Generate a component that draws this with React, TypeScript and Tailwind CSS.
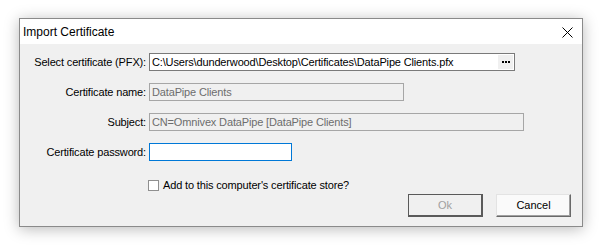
import React from "react";

const font = { fontFamily: '"Liberation Sans", Arial, sans-serif' };

function Label({ children }: { children: React.ReactNode }) {
  return (
    <div className="w-[127px] shrink-0 text-right pr-[1px] text-[11px] text-black leading-none tracking-[-0.15px]">
      {children}
    </div>
  );
}

export default function App() {
  return (
    <div className="w-[604px] h-[249px] bg-white pl-[19px] pt-[18px]" style={font}>
      <div className="w-[564px] h-[209px] border border-[#8a8a8a] bg-[#f0f0f0] flex flex-col shadow-[0_2px_14px_rgba(0,0,0,0.28)]">
        {/* title bar */}
        <div className="h-[25px] bg-white flex items-center justify-between pl-[3px] pr-[9px] shrink-0">
          <span className="text-[12px] text-black">Import Certificate</span>
          <svg width="11" height="11" viewBox="0 0 11 11" className="mt-[1px]">
            <path d="M0.5 0.5 L10.5 10.5 M10.5 0.5 L0.5 10.5" stroke="#000" strokeWidth="1" />
          </svg>
        </div>

        <div className="flex flex-col pt-[9px] gap-[12px] tracking-[-0.15px]">
          <div className="flex items-center gap-[2px] h-[18px]">
            <Label>Select certificate (PFX):</Label>
            <div className="w-[366px] h-[18px] border border-[#7a7a7a] bg-white flex items-center justify-between pl-[2px] pr-[1px]">
              <span className="text-[11px] text-black whitespace-nowrap">
                C:\Users\dunderwood\Desktop\Certificates\DataPipe Clients.pfx
              </span>
              <div className="w-[15px] h-[14px] bg-[#f0f0f0] flex items-center justify-center gap-[1px]">
                <span className="w-[2px] h-[2px] bg-black" />
                <span className="w-[2px] h-[2px] bg-black" />
                <span className="w-[2px] h-[2px] bg-black" />
              </div>
            </div>
          </div>

          <div className="flex items-center gap-[2px] h-[18px]">
            <Label>Certificate name:</Label>
            <div className="w-[255px] h-[18px] border border-[#a6a6a6] flex items-center pl-[2px]">
              <span className="text-[11px] text-[#6d6d6d]">DataPipe Clients</span>
            </div>
          </div>

          <div className="flex items-center gap-[2px] h-[18px]">
            <Label>Subject:</Label>
            <div className="w-[375px] h-[18px] border border-[#a6a6a6] flex items-center pl-[2px]">
              <span className="text-[11px] text-[#6d6d6d]">CN=Omnivex DataPipe [DataPipe Clients]</span>
            </div>
          </div>

          <div className="flex items-center gap-[2px] h-[18px]">
            <Label>Certificate password:</Label>
            <div className="w-[143px] h-[18px] border border-[#0078d7] bg-white" />
          </div>
        </div>

        <div className="flex items-center mt-[19px] pl-[128px] h-[11px]">
          <div className="w-[11px] h-[11px] border border-[#8f8f8f] bg-white" />
          <span className="ml-[4px] text-[11px] text-black tracking-[-0.15px]">Add to this computer's certificate store?</span>
        </div>

        <div className="flex justify-end gap-[13px] pr-[11px] mt-[3px]">
          <div className="w-[75px] h-[23px] border border-[#5a5a5a] border-r-2 border-b-2 bg-[#f0f0f0] flex items-center justify-center">
            <span className="text-[11px] text-[#a0a0a0]">Ok</span>
          </div>
          <div className="w-[75px] h-[23px] border border-t-[#e3e3e3] border-l-[#e3e3e3] border-r-[#696969] border-b-[#696969] bg-[#fafafa] flex items-center justify-center shadow-[inset_-1px_-1px_0_#a0a0a0]">
            <span className="text-[11px] text-black">Cancel</span>
          </div>
        </div>
      </div>
    </div>
  );
}
